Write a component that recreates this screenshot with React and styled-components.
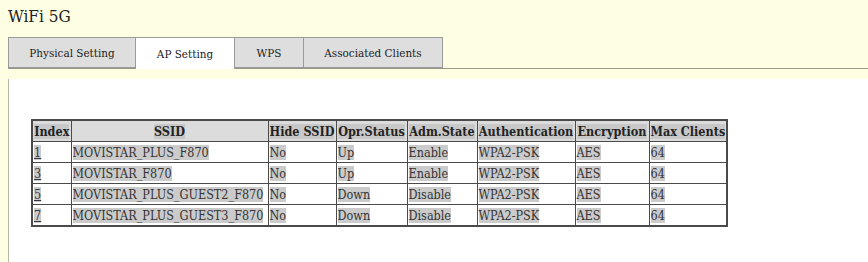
import React from "react";
import styled, { createGlobalStyle } from "styled-components";

const Global = createGlobalStyle`
  html, body { margin: 0; padding: 0; height: 100%; }
  body {
    background: #fefee2;
    font-family: "DejaVu Serif", "Liberation Serif", serif;
    font-stretch: condensed;
    color: #222;
  }
  #root { height: 100%; }
`;

const Page = styled.div`
  display: flex;
  flex-direction: column;
  height: 262px;
`;

const Title = styled.h1`
  margin: 0;
  padding: 6px 0 0 8px;
  height: 37px;
  box-sizing: border-box;
  font-size: 17px;
  font-weight: normal;
  color: #222;
`;

const TabBar = styled.div`
  display: flex;
  margin-left: 8px;
  border-bottom: 1px solid #9a9a8a;
  height: 31px;
`;

const Tab = styled.div`
  box-sizing: border-box;
  width: ${(p) => p.$w}px;
  height: ${(p) => (p.$active ? 32 : 31)}px;
  display: flex;
  align-items: center;
  justify-content: center;
  font-size: 11.6px;
  color: #222;
  background: ${(p) => (p.$active ? "#ffffff" : "#dedede")};
  border: 1px solid #9a9a9a;
  border-bottom: ${(p) => (p.$active ? "none" : "1px solid #9a9a9a")};
  margin-left: -1px;
  &:first-child { margin-left: 0; }
`;

const Panel = styled.div`
  flex: 1;
  margin: 10px 0 0 8px;
  background: #fff;
  border-left: 1px solid #b8b8a8;
  padding: 40px 0 0 22px;
`;

const Table = styled.table`
  border-collapse: collapse;
  border: 2px solid #4a4a4a;
  font-size: 12.5px;
`;

const Th = styled.th`
  background: #dcdcdc;
  border: 1px solid #4a4a4a;
  padding: 1px 1px;
  height: 18px;
  font-weight: bold;
  text-align: center;
  white-space: nowrap;
`;

const Td = styled.td`
  border: 1px solid #4a4a4a;
  padding: 1px 1px;
  height: 18px;
  text-align: left;
  white-space: nowrap;
  color: #333;
`;

const Sel = styled.span`
  background: ${(p) => (p.$head ? "#c8c8c8" : "#cbcbcb")};
`;

const IndexLink = styled.a`
  color: #334;
  text-decoration: underline;
  background: #cbcbcb;
`;

const tabs = [
  { label: "Physical Setting", w: 128 },
  { label: "AP Setting", w: 100, active: true },
  { label: "WPS", w: 70 },
  { label: "Associated Clients", w: 140 },
];

const heads = ["Index", "SSID", "Hide SSID", "Opr.Status", "Adm.State", "Authentication", "Encryption", "Max Clients"];
const widths = [39, 197, 68, 71, 70, 98, 74, 77];

const rows = [
  ["1", "MOVISTAR_PLUS_F870", "No", "Up", "Enable", "WPA2-PSK", "AES", "64"],
  ["3", "MOVISTAR_F870", "No", "Up", "Enable", "WPA2-PSK", "AES", "64"],
  ["5", "MOVISTAR_PLUS_GUEST2_F870", "No", "Down", "Disable", "WPA2-PSK", "AES", "64"],
  ["7", "MOVISTAR_PLUS_GUEST3_F870", "No", "Down", "Disable", "WPA2-PSK", "AES", "64"],
];

export default function App() {
  return (
    <Page>
      <Global />
      <Title>WiFi 5G</Title>
      <TabBar>
        {tabs.map((t) => (
          <Tab key={t.label} $w={t.w} $active={t.active}>
            {t.label}
          </Tab>
        ))}
      </TabBar>
      <Panel>
        <Table>
          <colgroup>
            {widths.map((w, i) => (
              <col key={i} style={{ width: w }} />
            ))}
          </colgroup>
          <thead>
            <tr>
              {heads.map((h) => (
                <Th key={h}>
                  <Sel $head>{h}</Sel>
                </Th>
              ))}
            </tr>
          </thead>
          <tbody>
            {rows.map((r) => (
              <tr key={r[0]}>
                {r.map((c, i) => (
                  <Td key={i}>
                    {i === 0 ? <IndexLink href="#">{c}</IndexLink> : <Sel>{c}</Sel>}
                  </Td>
                ))}
              </tr>
            ))}
          </tbody>
        </Table>
      </Panel>
    </Page>
  );
}
